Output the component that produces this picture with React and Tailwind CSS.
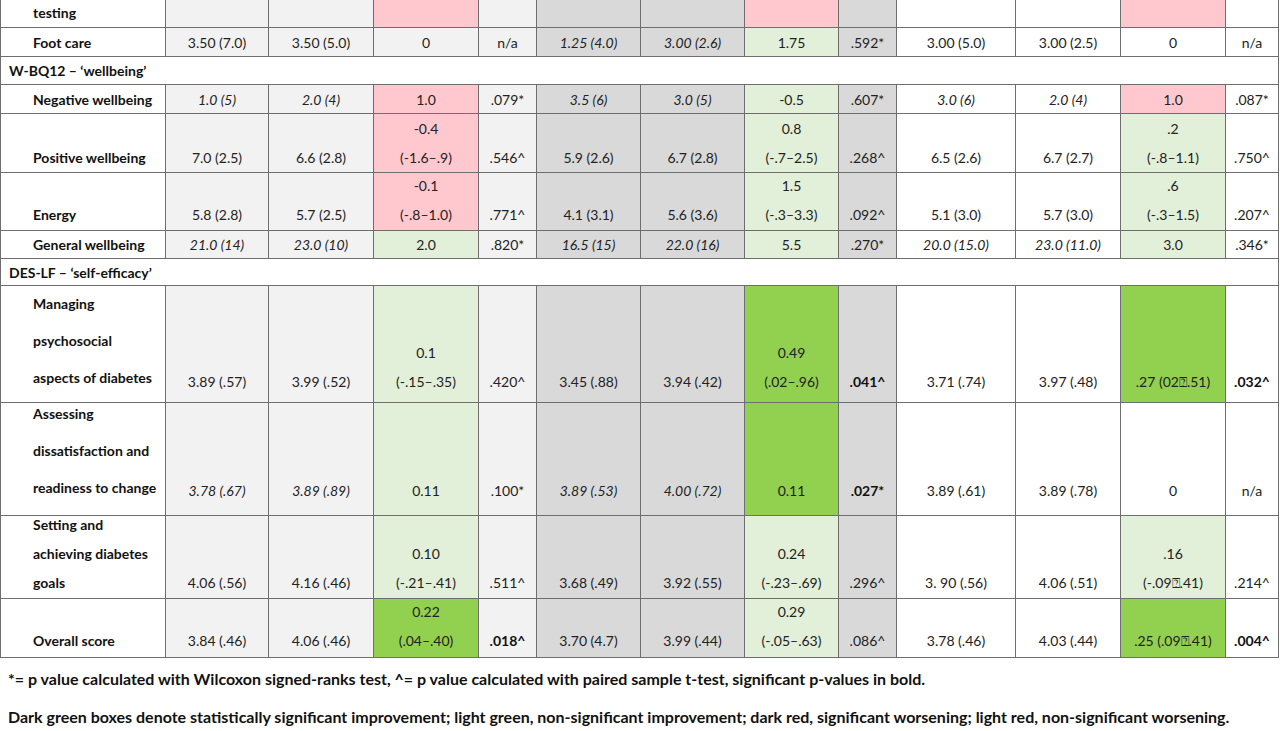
import React from "react";

const BG = {
  g1: "bg-[#f2f2f2]",
  g2: "bg-[#d9d9d9]",
  w: "bg-white",
  pk: "bg-[#ffc7ce]",
  lg: "bg-[#e2efd9]",
  dg: "bg-[#92d050]",
};

const COLS =
  "grid grid-rows-1 grid-cols-[165px_103px_105px_105px_58px_104px_104px_94px_58px_119px_105px_105px_1fr]";

const defaultBg = ["g1", "g1", "g1", "g1", "g2", "g2", "g2", "g2", "w", "w", "w", "w"];

// cell: [text, bgOverride, flags]  flags: "i" italic, "b" bold
const rows = [
  {
    label: ["testing"],
    h: "h-[31px]",
    mt: "mt-[-3px]",
    v: "center",
    cells: [[""], [""], ["", "pk"], [""], [""], [""], ["", "pk"], [""], [""], [""], ["", "pk"], [""]],
  },
  {
    label: ["Foot care"],
    h: "h-[29px]",
    v: "center",
    cells: [
      ["3.50 (7.0)"], ["3.50 (5.0)"], ["0"], ["n/a"],
      ["1.25 (4.0)", null, "i"], ["3.00 (2.6)", null, "i"], ["1.75", "lg"], [".592*"],
      ["3.00 (5.0)"], ["3.00 (2.5)"], ["0"], ["n/a"],
    ],
  },
  { section: "W-BQ12 \u2013 \u2018wellbeing\u2019", h: "h-[28px]" },
  {
    label: ["Negative wellbeing"],
    h: "h-[29px]",
    v: "center",
    cells: [
      ["1.0 (5)", null, "i"], ["2.0 (4)", null, "i"], ["1.0", "pk"], [".079*"],
      ["3.5 (6)", null, "i"], ["3.0 (5)", null, "i"], ["-0.5", "lg"], [".607*"],
      ["3.0 (6)", null, "i"], ["2.0 (4)", null, "i"], ["1.0", "pk"], [".087*"],
    ],
  },
  {
    label: ["Positive wellbeing"],
    h: "h-[59px]",
    pb: "pb-[0px]",
    cells: [
      ["7.0 (2.5)"], ["6.6 (2.8)"], [["-0.4", "(-1.6\u2013.9)"], "pk"], [".546^"],
      ["5.9 (2.6)"], ["6.7 (2.8)"], [["0.8", "(-.7\u20132.5)"], "lg"], [".268^"],
      ["6.5 (2.6)"], ["6.7 (2.7)"], [[".2", "(-.8\u20131.1)"], "lg"], [".750^"],
    ],
  },
  {
    label: ["Energy"],
    h: "h-[58px]",
    pb: "pb-[1px]",
    cells: [
      ["5.8 (2.8)"], ["5.7 (2.5)"], [["-0.1", "(-.8\u20131.0)"], "pk"], [".771^"],
      ["4.1 (3.1)"], ["5.6 (3.6)"], [["1.5", "(-.3\u20133.3)"], "lg"], [".092^"],
      ["5.1 (3.0)"], ["5.7 (3.0)"], [[".6", "(-.3\u20131.5)"], "lg"], [".207^"],
    ],
  },
  {
    label: ["General wellbeing"],
    h: "h-[28px]",
    v: "center",
    cells: [
      ["21.0 (14)", null, "i"], ["23.0 (10)", null, "i"], ["2.0", "lg"], [".820*"],
      ["16.5 (15)", null, "i"], ["22.0 (16)", null, "i"], ["5.5", "lg"], [".270*"],
      ["20.0 (15.0)", null, "i"], ["23.0 (11.0)", null, "i"], ["3.0", "lg"], [".346*"],
    ],
  },
  { section: "DES-LF \u2013 \u2018self-efficacy\u2019", h: "h-[27px]" },
  {
    label: ["Managing", "psychosocial", "aspects of diabetes"],
    labelLead: "leading-[37px]",
    labelPb: "pb-[6px]",
    h: "h-[117px]",
    pb: "pb-[6px]",
    cells: [
      ["3.89 (.57)"], ["3.99 (.52)"], [["0.1", "(-.15\u2013.35)"], "lg"], [".420^"],
      ["3.45 (.88)"], ["3.94 (.42)"], [["0.49", "(.02\u2013.96)"], "dg"], [".041^", null, "b"],
      ["3.71 (.74)"], ["3.97 (.48)"], [".27 (02\u2370.51)", "dg"], [".032^", null, "b"],
    ],
  },
  {
    label: ["Assessing", "dissatisfaction and", "readiness to change"],
    labelLead: "leading-[37px]",
    labelPb: "pb-[9px]",
    h: "h-[113px]",
    pb: "pb-[10px]",
    cells: [
      ["3.78 (.67)", null, "i"], ["3.89 (.89)", null, "i"], ["0.11", "lg"], [".100*"],
      ["3.89 (.53)", null, "i"], ["4.00 (.72)", null, "i"], ["0.11", "dg"], [".027*", null, "b"],
      ["3.89 (.61)"], ["3.89 (.78)"], ["0"], ["n/a"],
    ],
  },
  {
    label: ["Setting and", "achieving diabetes", "goals"],
    labelLead: "leading-[29px]",
    labelPb: "pb-[1px]",
    h: "h-[83px]",
    pb: "pb-[1px]",
    cells: [
      ["4.06 (.56)"], ["4.16 (.46)"], [["0.10", "(-.21\u2013.41)"], "lg"], [".511^"],
      ["3.68 (.49)"], ["3.92 (.55)"], [["0.24", "(-.23\u2013.69)"], "lg"], [".296^"],
      ["3. 90 (.56)"], ["4.06 (.51)"], [[".16", "(-.09\u2370.41)"], "lg"], [".214^"],
    ],
  },
  {
    label: ["Overall score"],
    h: "h-[59px]",
    pb: "pb-[2px]",
    cells: [
      ["3.84 (.46)"], ["4.06 (.46)"], [["0.22", "(.04\u2013.40)"], "dg"], [".018^", null, "b"],
      ["3.70 (4.7)"], ["3.99 (.44)"], [["0.29", "(-.05\u2013.63)"], "lg"], [".086^"],
      ["3.78 (.46)"], ["4.03 (.44)"], [".25 (.09\u2370.41)", "dg"], [".004^", null, "b"],
    ],
  },
];

function Cell({ cell, idx, v, pb }) {
  const [text, bgo, flags = ""] = cell;
  const bg = BG[bgo || defaultBg[idx]];
  const lines = Array.isArray(text) ? text : [text];
  const align = v === "center" ? "justify-center" : "justify-end";
  const style = `${flags.includes("i") ? "italic" : ""} ${flags.includes("b") ? "font-bold text-[#111]" : ""}`;
  return (
    <div
      className={`min-h-0 flex flex-col items-center ${align} ${v === "center" ? "" : pb || ""} ${bg} ${
        idx < 11 ? "border-r border-[#6e6e6e]" : ""
      }`}
    >
      {lines.map((l, i) => (
        <div key={i} className={`leading-[29px] whitespace-nowrap ${style}`}>
          {l}
        </div>
      ))}
    </div>
  );
}

function Row({ row }) {
  if (row.section) {
    return (
      <div className={`${row.h} flex items-center border-b border-[#6e6e6e] pl-[8px] font-bold text-[#111]`}>
        {row.section}
      </div>
    );
  }
  const labelAlign = row.v === "center" ? "justify-center" : "justify-end";
  return (
    <div className={`${COLS} ${row.h} ${row.mt || ""} border-b border-[#6e6e6e]`}>
      <div
        className={`min-h-0 flex flex-col ${labelAlign} ${row.v === "center" ? "" : row.labelPb || row.pb || ""} pl-[32px] border-r border-[#6e6e6e] font-bold text-[#111] bg-white`}
      >
        {row.label.map((l, i) => (
          <div key={i} className={`${row.labelLead || "leading-[29px]"} whitespace-nowrap`}>
            {l}
          </div>
        ))}
      </div>
      {row.cells.map((c, i) => (
        <Cell key={i} cell={c} idx={i} v={row.v} pb={row.pb} />
      ))}
    </div>
  );
}

export default function App() {
  return (
    <div className="w-[1280px] h-[731px] overflow-hidden bg-white text-[14px] text-[#222] font-['Lato','Liberation_Sans',sans-serif]">
      <div className="w-[1279px] border-l border-r border-[#6e6e6e]">
        {rows.map((r, i) => (
          <Row key={i} row={r} />
        ))}
      </div>
      <div className="pl-[8px] pt-[2px] font-bold text-[#111] text-[16px] leading-[38px]">
        <div>
          *= p value calculated with Wilcoxon signed-ranks test, ^= p value calculated with paired sample t-test,
          significant p-values in bold.
        </div>
        <div>
          Dark green boxes denote statistically significant improvement; light green, non-significant improvement;
          dark red, significant worsening; light red, non-significant worsening.
        </div>
      </div>
    </div>
  );
}
